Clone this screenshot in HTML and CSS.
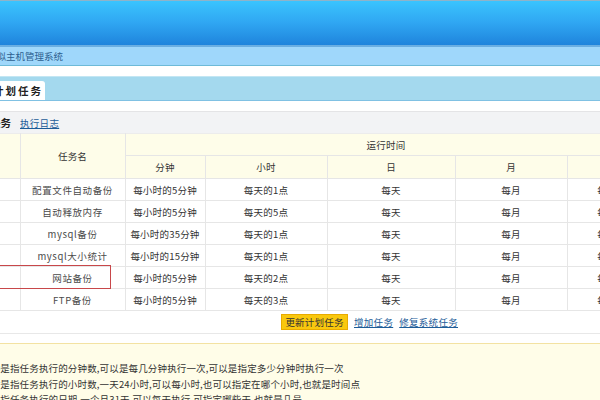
FILE: index.html
```html
<!DOCTYPE html>
<html lang="zh-CN">
<head>
<meta charset="utf-8">
<title>计划任务</title>
<link rel="stylesheet" href="styles.css">
</head>
<body>
<div class="page">
  <div class="top"></div>
  <div class="subbar"><span class="sys">虚拟主机管理系统</span></div>
  <div class="tabs"><div class="tab"><span class="tabtext">计划任务</span></div></div>
  <div class="toolbar"><b class="cur">计划任务</b><a class="link" href="#">执行日志</a></div>
  <div class="tablewrap">
    <table class="grid">
      <colgroup>
        <col class="c0"><col class="c1"><col class="c2"><col class="c3"><col class="c4"><col class="c5"><col class="c6">
      </colgroup>
      <thead>
        <tr class="h1"><th rowspan="2"></th><th rowspan="2">任务名</th><th colspan="5">运行时间</th></tr>
        <tr class="h2"><th>分钟</th><th>小时</th><th>日</th><th>月</th><th>周</th></tr>
      </thead>
      <tbody>
        <tr><td></td><td class="name">配置文件自动备份</td><td>每小时的5分钟</td><td>每天的1点</td><td>每天</td><td>每月</td><td>每周</td></tr>
        <tr><td></td><td class="name">自动释放内存</td><td>每小时的5分钟</td><td>每天的5点</td><td>每天</td><td>每月</td><td>每周</td></tr>
        <tr><td></td><td class="name">mysql备份</td><td>每小时的35分钟</td><td>每天的1点</td><td>每天</td><td>每月</td><td>每周</td></tr>
        <tr><td></td><td class="name">mysql大小统计</td><td>每小时的15分钟</td><td>每天的1点</td><td>每天</td><td>每月</td><td>每周</td></tr>
        <tr><td></td><td class="name">网站备份</td><td>每小时的5分钟</td><td>每天的2点</td><td>每天</td><td>每月</td><td>每周</td></tr>
        <tr><td></td><td class="name">FTP备份</td><td>每小时的5分钟</td><td>每天的3点</td><td>每天</td><td>每月</td><td>每周</td></tr>
      </tbody>
    </table>
    <div class="mark"></div>
  </div>
  <div class="actions">
    <button class="btn" type="button">更新计划任务</button>
    <a class="link" href="#">增加任务</a>
    <a class="link" href="#">修复系统任务</a>
  </div>
  <div class="note">
    <p>分钟是指任务执行的分钟数,可以是每几分钟执行一次,可以是指定多少分钟时执行一次</p>
    <p>小时是指任务执行的小时数,一天24小时,可以每小时,也可以指定在哪个小时,也就是时间点</p>
    <p>日是指任务执行的日期,一个月31天,可以每天执行,可指定哪些天,也就是几号</p>
  </div>
</div>
</body>
</html>
```

FILE: styles.css
```css
html, body {
  margin: 0;
  padding: 0;
  width: 600px;
  height: 400px;
  overflow: hidden;
  background: #ffffff;
}
.page {
  font-family: "Noto Sans CJK SC", "Noto Sans", sans-serif;
  font-size: 9.5px;
  color: #333333;
  width: 600px;
  overflow: hidden;
}
.top {
  height: 45px;
  border-top: 1px solid #8fb3c9;
  box-sizing: border-box;
  background: linear-gradient(to bottom, #3ac4fe 0%, #2fa6f2 50%, #1f84dc 100%);
}
.subbar {
  height: 18px;
  border-top: 2px solid #6aaee2;
  border-bottom: 1px solid #6dbad8;
  background: #9fd7fb;
  display: flex;
  align-items: center;
  overflow: hidden;
}
.sys {
  margin-left: -13px;
  color: #2d5f90;
  font-size: 9.5px;
  white-space: nowrap;
}
.tabs {
  margin-top: 10px;
  height: 23px;
  background: #a4d9ee;
  border-top: 1px solid #c3e6f3;
  border-bottom: 1px solid #80c1e3;
  display: flex;
  align-items: flex-end;
  overflow: hidden;
}
.tab {
  background: #ffffff;
  height: 19px;
  width: 45px;
  border-top-right-radius: 3px;
  display: flex;
  align-items: center;
  white-space: nowrap;
  overflow: hidden;
}
.tabtext {
  margin-left: -7px;
  font-weight: bold;
  font-size: 10.5px;
  letter-spacing: 2px;
  color: #222222;
}
.toolbar {
  margin-top: 10px;
  height: 21px;
  background: #f2f3f5;
  border-top: 1px solid #e4e4e6;
  display: flex;
  align-items: center;
  gap: 9px;
  overflow: hidden;
  white-space: nowrap;
}
.cur {
  margin-left: -31px;
  font-size: 10.5px;
  color: #222222;
}
.link {
  color: #1d5c98;
  text-decoration: underline;
  font-size: 9.5px;
  letter-spacing: 0.3px;
}
.tablewrap {
  position: relative;
  width: 600px;
  overflow: hidden;
}
.grid {
  border-collapse: collapse;
  table-layout: fixed;
  width: 647px;
}
.c0 { width: 20px; }
.c1 { width: 105px; }
.c2 { width: 80px; }
.c3 { width: 122px; }
.c4 { width: 128px; }
.c5 { width: 112px; }
.c6 { width: 80px; }
.grid th, .grid td {
  border: 1px solid #e6e6e6;
  padding: 0;
  text-align: center;
  font-weight: normal;
  white-space: nowrap;
  height: 21px;
  letter-spacing: 0.2px;
}
.grid thead tr:first-child th {
  border-top: 1px solid #ececec;
}
.grid th {
  background: #fefde9;
  color: #333333;
}
.grid .h2 th {
  height: 22px;
}
.grid td {
  color: #333333;
}
.grid td.name {
  color: #4a4a4a;
  letter-spacing: 0.6px;
}
.grid tr > :first-child {
  border-left: none;
}
.mark {
  position: absolute;
  left: -10px;
  top: 132px;
  width: 119px;
  height: 22px;
  border: 1px solid #c8474a;
}
.actions {
  height: 22px;
  border-bottom: 1px solid #e8e8e8;
  display: flex;
  align-items: center;
  padding-left: 281px;
  gap: 6px;
  white-space: nowrap;
}
.btn {
  font-family: inherit;
  font-size: 9.5px;
  color: #333333;
  background: #f9c80e;
  border: 1px solid #e8ab00;
  height: 16px;
  width: 67px;
  padding: 0;
  letter-spacing: 0.2px;
}
.note {
  margin-top: 9px;
  background: #fffde8;
  border-top: 1px solid #f3e2a2;
  padding-top: 17px;
  height: 80px;
  overflow: hidden;
}
.note p {
  margin: 0 0 0 -19px;
  line-height: 15.5px;
  white-space: nowrap;
  letter-spacing: 0.15px;
  color: #333333;
}
```
